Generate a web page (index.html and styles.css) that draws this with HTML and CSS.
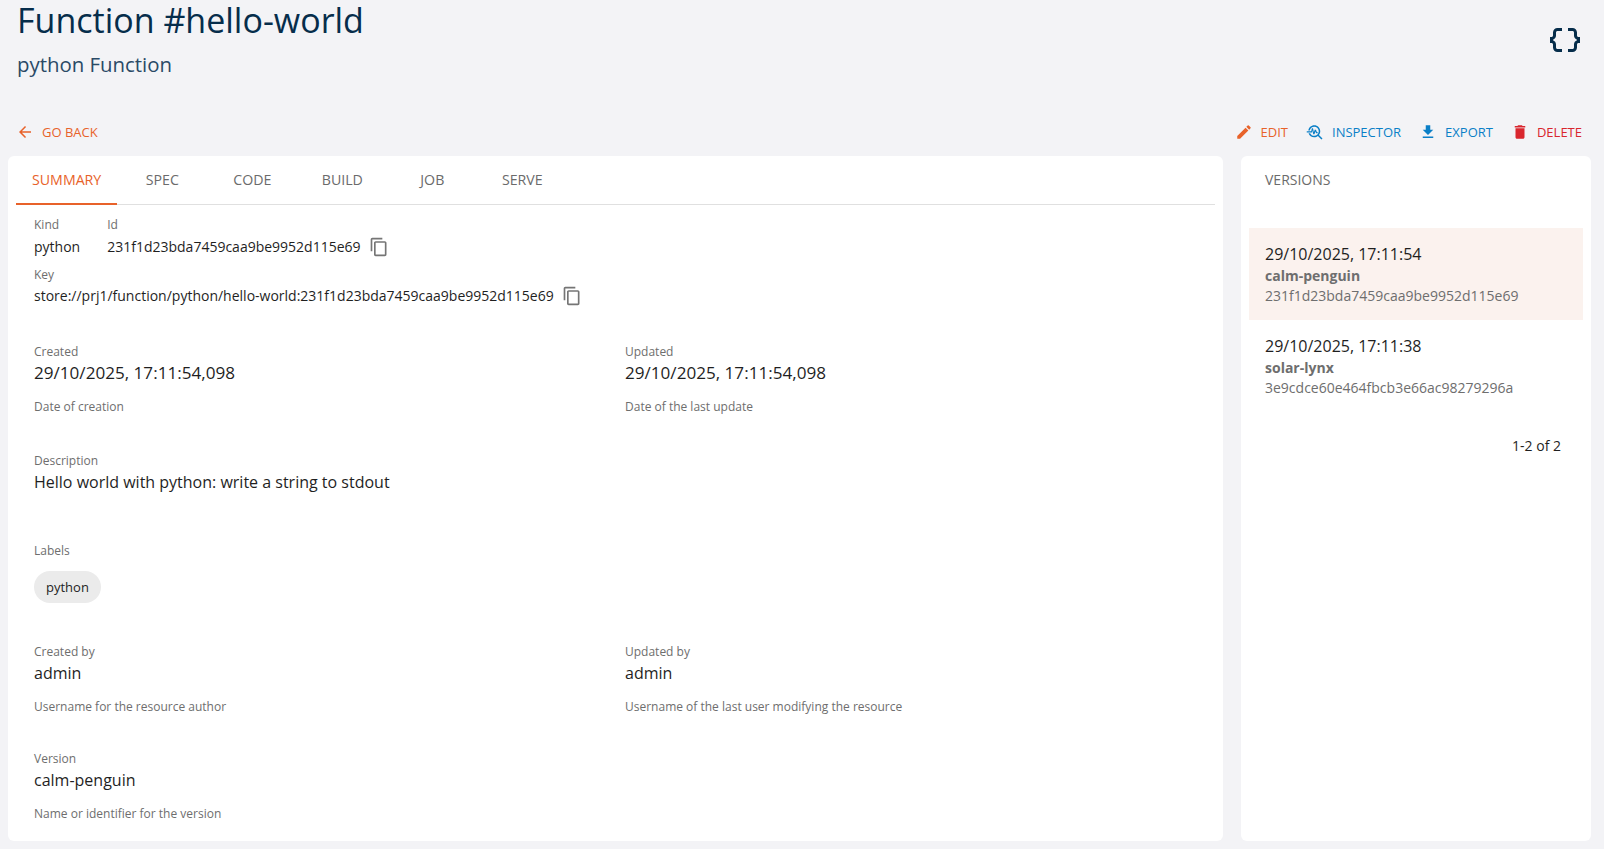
FILE: index.html
```html
<!DOCTYPE html>
<html lang="en">
<head>
<meta charset="utf-8">
<title>Function #hello-world</title>
<link rel="stylesheet" href="styles.css">
</head>
<body>
<header class="page-head">
  <div class="titles">
    <h1 class="title">Function #hello-world</h1>
    <h2 class="subtitle">python Function</h2>
  </div>
  <svg class="kind-icon" viewBox="0 0 24 24"><path d="M4 7v2c0 .55-.45 1-1 1H2v4h1c.55 0 1 .45 1 1v2c0 1.65 1.35 3 3 3h3v-2H7c-.55 0-1-.45-1-1v-2c0-1.3-.84-2.42-2-2.83v-.34C5.16 11.42 6 10.3 6 9V7c0-.55.45-1 1-1h3V4H7C5.35 4 4 5.35 4 7zM17 4h-3v2h3c.55 0 1 .45 1 1v2c0 1.3.84 2.42 2 2.83v.34c-1.16.41-2 1.52-2 2.83v2c0 .55-.45 1-1 1h-3v2h3c1.65 0 3-1.35 3-3v-2c0-.55.45-1 1-1h1v-4h-1c-.55 0-1-.45-1-1V7c0-1.65-1.35-3-3-3z"/></svg>
</header>
<nav class="actions">
  <a class="action orange"><svg viewBox="0 0 24 24"><path d="M20 11H7.83l5.59-5.59L12 4l-8 8 8 8 1.41-1.41L7.83 13H20v-2z"/></svg>Go back</a>
  <div class="action-group">
    <a class="action orange"><svg viewBox="0 0 24 24"><path d="M3 17.25V21h3.75L17.81 9.94l-3.75-3.75L3 17.25zM20.71 7.04c.39-.39.39-1.02 0-1.41l-2.34-2.34a.9959.9959 0 0 0-1.41 0l-1.83 1.83 3.75 3.75 1.83-1.83z"/></svg>Edit</a>
    <a class="action blue"><svg viewBox="0 0 24 24"><path d="M22 20.59l-4.69-4.69C18.37 14.55 19 12.85 19 11c0-4.42-3.58-8-8-8-4.08 0-7.44 3.05-7.93 7h2.02C5.57 7.17 8.03 5 11 5c3.31 0 6 2.69 6 6s-2.69 6-6 6c-2.42 0-4.5-1.44-5.45-3.5H3.4C4.45 16.69 7.46 19 11 19c1.85 0 3.55-.63 4.9-1.69L20.59 22 22 20.59z"/><path d="M8.43 9.69 9.65 15h1.64l1.26-3.78.95 2.28H15.5V12h-1l-1.25-3h-1.64l-1.12 3.37L9.35 7H7.81L6.9 11H1v1.5h7l.43-2.81z"/></svg>Inspector</a>
    <a class="action blue"><svg viewBox="0 0 24 24"><path d="M5 20h14v-2H5v2zM19 9h-4V3H9v6H5l7 7 7-7z"/></svg>Export</a>
    <a class="action red"><svg viewBox="0 0 24 24"><path d="M6 19c0 1.1.9 2 2 2h8c1.1 0 2-.9 2-2V7H6v12zM19 4h-3.5l-1-1h-5l-1 1H5v2h14V4z"/></svg>Delete</a>
  </div>
</nav>
<main class="columns">
  <section class="card main-card">
    <div class="tabs">
      <span class="tab active">Summary</span>
      <span class="tab">Spec</span>
      <span class="tab">Code</span>
      <span class="tab">Build</span>
      <span class="tab">Job</span>
      <span class="tab">Serve</span>
    </div>
    <div class="fields">
      <div class="id-row">
        <div>
          <div class="lbl">Kind</div>
          <div class="val-sm">python</div>
        </div>
        <div>
          <div class="lbl">Id</div>
          <div class="val-sm copy-row">231f1d23bda7459caa9be9952d115e69<svg class="copy" viewBox="0 0 24 24"><path d="M16 1H4c-1.1 0-2 .9-2 2v14h2V3h12V1zm3 4H8c-1.1 0-2 .9-2 2v14c0 1.1.9 2 2 2h11c1.1 0 2-.9 2-2V7c0-1.1-.9-2-2-2zm0 16H8V7h11v14z"/></svg></div>
        </div>
      </div>
      <div class="key-row">
        <div class="lbl">Key</div>
        <div class="val-sm copy-row">store://prj1/function/python/hello-world:231f1d23bda7459caa9be9952d115e69<svg class="copy" viewBox="0 0 24 24"><path d="M16 1H4c-1.1 0-2 .9-2 2v14h2V3h12V1zm3 4H8c-1.1 0-2 .9-2 2v14c0 1.1.9 2 2 2h11c1.1 0 2-.9 2-2V7c0-1.1-.9-2-2-2zm0 16H8V7h11v14z"/></svg></div>
      </div>
      <div class="two-col dates">
        <div>
          <div class="lbl">Created</div>
          <div class="val date-val">29/10/2025, 17:11:54,098</div>
          <div class="help">Date of creation</div>
        </div>
        <div>
          <div class="lbl">Updated</div>
          <div class="val date-val">29/10/2025, 17:11:54,098</div>
          <div class="help">Date of the last update</div>
        </div>
      </div>
      <div class="block description">
        <div class="lbl">Description</div>
        <div class="val">Hello world with python: write a string to stdout</div>
      </div>
      <div class="block labels">
        <div class="lbl">Labels</div>
        <span class="chip">python</span>
      </div>
      <div class="two-col people">
        <div>
          <div class="lbl">Created by</div>
          <div class="val">admin</div>
          <div class="help">Username for the resource author</div>
        </div>
        <div>
          <div class="lbl">Updated by</div>
          <div class="val">admin</div>
          <div class="help">Username of the last user modifying the resource</div>
        </div>
      </div>
      <div class="block version">
        <div class="lbl">Version</div>
        <div class="val">calm-penguin</div>
        <div class="help">Name or identifier for the version</div>
      </div>
    </div>
  </section>
  <aside class="card side-card">
    <div class="side-title">Versions</div>
    <ul class="versions">
      <li class="version-item selected">
        <div class="v-date">29/10/2025, 17:11:54</div>
        <div class="v-name">calm-penguin</div>
        <div class="v-id">231f1d23bda7459caa9be9952d115e69</div>
      </li>
      <li class="version-item">
        <div class="v-date">29/10/2025, 17:11:38</div>
        <div class="v-name">solar-lynx</div>
        <div class="v-id">3e9cdce60e464fbcb3e66ac98279296a</div>
      </li>
    </ul>
    <div class="pager">1-2 of 2</div>
  </aside>
</main>
</body>
</html>
```
FILE: styles.css
```css
* { box-sizing: border-box; }
html, body { height: 100%; }
body {
  margin: 0;
  background: #f3f3f6;
  font-family: "Open Sans", sans-serif;
  color: rgba(0,0,0,0.87);
  overflow: hidden;
}
.page-head {
  display: flex;
  justify-content: space-between;
  align-items: flex-start;
  height: 120px;
  padding: 0 21px 0 17px;
}
.title {
  margin: 0;
  font-size: 34px;
  font-weight: 400;
  line-height: 41px;
  color: #062d4b;
}
.subtitle {
  margin: 9px 0 0;
  font-size: 20.4px;
  font-weight: 400;
  line-height: 28px;
  color: #2a4a66;
}
.kind-icon { width: 36px; height: 36px; margin: 22px 0 0; fill: #062d4b; }
.actions {
  display: flex;
  justify-content: space-between;
  align-items: center;
  height: 24px;
  padding: 0 22px 0 16px;
}
.action-group { display: flex; gap: 18px; }
.action {
  display: flex;
  align-items: center;
  gap: 8px;
  font-size: 13px;
  line-height: 24px;
  text-transform: uppercase;
}
.action svg { width: 18px; height: 18px; fill: currentColor; flex: none; }
.orange { color: #e8622a; }
.blue { color: #0a7fc7; }
.red { color: #d9262e; }
.columns {
  display: flex;
  gap: 18px;
  margin: 12px 13px 0 8px;
}
.card { background: #fff; border-radius: 6px; height: 685px; }
.main-card { width: 1215px; padding: 0 8px; }
.side-card { width: 350px; padding: 0 8px; }
.tabs {
  display: flex;
  height: 49px;
  border-bottom: 1px solid #e0e0e0;
}
.tab {
  min-width: 90px;
  padding: 0 16px;
  font-size: 14.2px;
  line-height: 48px;
  text-align: center;
  text-transform: uppercase;
  color: #6b6b6b;
}
.tab.active { color: #e8622a; border-bottom: 2px solid #e8622a; height: 49px; }
.fields { padding: 12px 0 0 18px; }
.lbl { font-size: 12px; line-height: 16px; color: #6e6e6e; }
.val { font-size: 16px; line-height: 24px; margin-top: 1px; color: #1f1f1f; }
.date-val { font-size: 17.1px; }
.val-sm { font-size: 14px; line-height: 22px; margin-top: 3px; color: #1f1f1f; }
.help { font-size: 12px; line-height: 16px; margin-top: 14px; color: #6e6e6e; }
.id-row { display: flex; gap: 27px; }
.copy-row { display: flex; align-items: center; gap: 8px; }
.copy { width: 20px; height: 20px; fill: #757575; flex: none; }
.key-row { margin-top: 9px; }
.key-row .val-sm { margin-top: 2px; }
.two-col { display: grid; grid-template-columns: 591px 1fr; }
.dates { margin-top: 37px; }
.description { margin-top: 38px; }
.labels { margin-top: 49px; }
.chip {
  display: inline-block;
  margin-top: 12px;
  padding: 0 12px;
  height: 32px;
  line-height: 32px;
  border-radius: 16px;
  background: #ebebeb;
  font-size: 13px;
  color: #1f1f1f;
}
.people { margin-top: 41px; }
.version { margin-top: 36px; }
.side-title {
  padding-left: 16px;
  margin-top: 0;
  font-size: 14px;
  line-height: 48px;
  text-transform: uppercase;
  color: #6b6b6b;
}
.versions { list-style: none; margin: 24px 0 0; padding: 0; }
.version-item { height: 92px; padding: 14px 16px 0; }
.version-item.selected { background: #fbf2ee; }
.v-date { font-size: 16px; line-height: 24px; color: #1f1f1f; }
.v-name { font-size: 14px; line-height: 20px; font-weight: 700; color: #6e6e6e; }
.v-id { font-size: 14px; line-height: 20px; color: #6e6e6e; }
.pager { margin-top: 24px; padding-right: 22px; text-align: right; font-size: 14px; line-height: 20px; color: #1f1f1f; }
```
